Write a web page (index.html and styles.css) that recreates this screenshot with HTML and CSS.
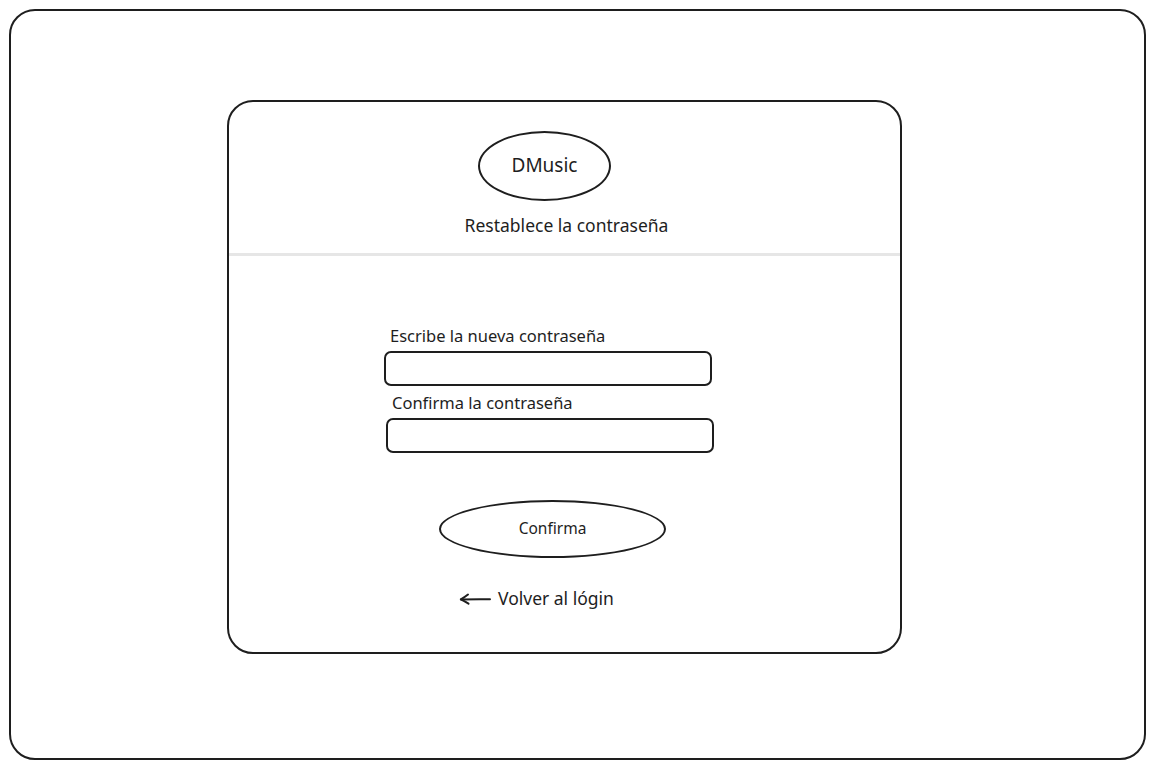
FILE: index.html
```html
<!DOCTYPE html>
<html lang="es">
<head>
    <meta charset="UTF-8">
    <title>DMusic - Restablece la contraseña</title>
    <link rel="stylesheet" href="styles.css">
</head>
<body>
    <div id="frame">
        <div id="card">
            <div class="card-header">
                <div class="logo">DMusic</div>
                <div class="title">Restablece la contraseña</div>
            </div>
            <div class="divider"></div>
            <form class="reset-form">
                <label class="field-label first">Escribe la nueva contraseña</label>
                <div class="field-input first"></div>
                <label class="field-label second">Confirma la contraseña</label>
                <div class="field-input second"></div>
                <div class="confirm-btn">Confirma</div>
                <div class="back-link">
                    <svg width="32" height="14" viewBox="0 0 32 14">
                        <path d="M31 7.3 C22 7 12 7.2 2 7.4" fill="none" stroke="#1e1e1e" stroke-width="2" stroke-linecap="round"/>
                        <path d="M9 2.5 C6.5 4.5 4.2 6 1.8 7.3 C4.5 8.6 7 10 9.5 11.6" fill="none" stroke="#1e1e1e" stroke-width="2" stroke-linecap="round" stroke-linejoin="round"/>
                    </svg>
                    <span>Volver al lógin</span>
                </div>
            </form>
        </div>
    </div>
</body>
</html>
```

FILE: styles.css
```css
* {
    margin: 0;
    padding: 0;
    box-sizing: border-box;
}

body {
    background-color: #fff;
    color: #1e1e1e;
    font-family: 'Noto Sans', 'Open Sans', sans-serif;
    width: 1155px;
    height: 769px;
    overflow: hidden;
}

#frame {
    margin: 9px 0 0 9px;
    width: 1137px;
    height: 751px;
    border: 2px solid #1e1e1e;
    border-radius: 26px;
    padding: 89px 0 0 216px;
}

#card {
    width: 675px;
    height: 554px;
    border: 2px solid #1e1e1e;
    border-radius: 26px;
    display: flex;
    flex-direction: column;
}

.card-header {
    display: flex;
    flex-direction: column;
    align-items: center;
    padding-top: 29px;
    height: 151px;
}

.logo {
    width: 133px;
    height: 70px;
    border: 2px solid #1e1e1e;
    border-radius: 50%;
    display: flex;
    align-items: center;
    justify-content: center;
    font-size: 19px;
    margin-right: 40px;
    padding-bottom: 2px;
}

.title {
    margin-top: 13px;
    margin-left: 4px;
    font-size: 17.5px;
    line-height: 22px;
}

.divider {
    height: 3px;
    background: #e6e6e6;
}

.reset-form {
    display: flex;
    flex-direction: column;
    padding-left: 155px;
    padding-top: 70px;
}

.field-label {
    font-size: 16.5px;
    line-height: 20px;
    margin-left: 6px;
}

.field-label.second {
    margin-left: 8px;
    margin-top: 7px;
}

.field-input {
    width: 328px;
    height: 35px;
    border: 2px solid #1e1e1e;
    border-radius: 7px;
    margin-top: 5px;
}

.field-input.second {
    margin-left: 2px;
    margin-top: 5px;
}

.confirm-btn {
    width: 227px;
    height: 58px;
    margin: 47px 0 0 55px;
    border: 2px solid #1e1e1e;
    border-radius: 50%;
    display: flex;
    align-items: center;
    justify-content: center;
    font-size: 15.5px;
    padding-bottom: 3px;
}

.back-link {
    display: flex;
    align-items: center;
    gap: 7px;
    margin: 28px 0 0 75px;
    font-size: 17.5px;
}

.back-link svg {
    margin-top: 1px;
}
```
